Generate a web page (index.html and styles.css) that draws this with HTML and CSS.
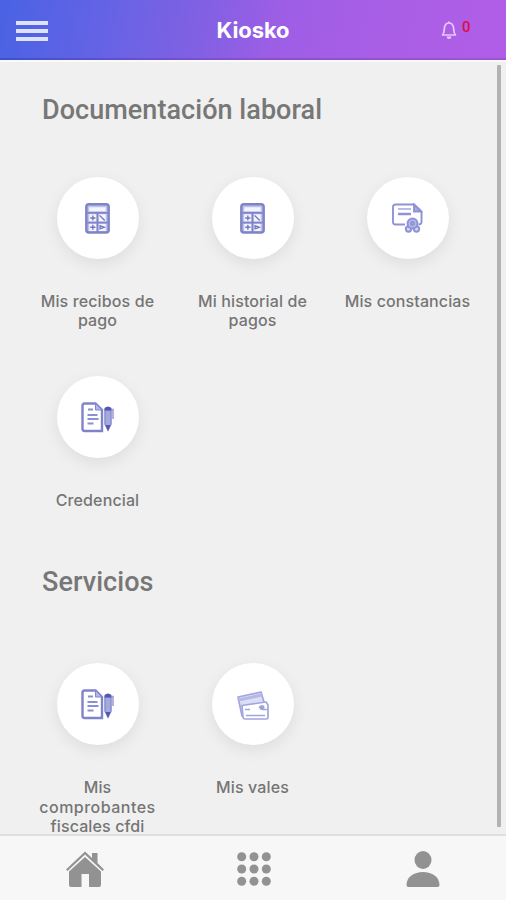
FILE: index.html
```html
<!DOCTYPE html>
<html lang="es">
<head>
<meta charset="utf-8">
<title>Kiosko</title>
<link rel="stylesheet" href="styles.css">
</head>
<body>
<svg class="sprite" aria-hidden="true">
  <symbol id="calc" viewBox="0 0 24 30">
    <rect x="1.2" y="1.2" width="21.6" height="27.4" rx="2.5" fill="#bec1ea" stroke="#7f84c9" stroke-width="2.4"/>
    <path d="M4 4h16v4H4zM4 11h7v7H4zM13 11h7v7h-7zM4 20h7v7H4zM13 20h7v7h-7z" fill="#f4f4fc"/>
    <path d="M2 9.5h20M12 10v18M2 19h20" stroke="#7f84c9" stroke-width="1.8"/>
    <path d="M5 14.5h5M7.5 12v5M14 12l5 5M5 23.5h5M7.5 21v5M14.5 22v3l4-1.5z" stroke="#7074c2" stroke-width="1.3" fill="none"/>
  </symbol>
  <symbol id="doc" viewBox="0 0 33 31">
    <path d="M3.500 1.500h11l6.500 6.500v21H3.500q-2 0-2-2v-23.500q0-2 2-2z" fill="#fff" stroke="#7f84ca" stroke-width="2.400"/>
    <path d="M14.500 1.500v6.500h6.500z" fill="#b4b8e6" stroke="#8287cc"/>
    <path d="M7 7.500h5M6.500 13h10M6.500 17h11M6.500 21.500h6" stroke="#8b90d2" stroke-width="1.800"/>
    <path d="M24 8h6v14l-3 6-3-6z" fill="#a5aade" stroke="#8a8fd0" stroke-width="1.600"/>
    <path d="M23.500 6q3.500-3 7 0v2.500h-7zM24.500 23h5L27 29z" fill="#5357b2"/>
    <path d="M30.500 7.500H32V17" stroke="#979bd8" stroke-width="1.500" fill="none"/>
  </symbol>
</svg>
<div class="app">
  <header class="top">
    <div class="burger"><i></i><i></i><i></i></div>
    <h1>Kiosko</h1>
    <div class="alerts">
      <svg class="bell" viewBox="0 0 16 19"><path d="M1.500 14C3.500 12 3 9.500 3.500 6.500C4 3.500 5.800 2 8 2s4 1.500 4.500 4.500c.5 3 0 5.500 2 7.500zM8 2V.5" fill="none" stroke="#e6cafa" stroke-width="1.700" stroke-linejoin="round"/><path d="M5.500 15.500h5Q10 18 8 18t-2.500-2.500z" fill="#e6cafa"/></svg>
      <span class="count">0</span>
    </div>
  </header>
  <main>
    <div class="content">
      <section>
        <h2>Documentación laboral</h2>
        <div class="grid">
          <div class="item"><div class="disc"><svg width="25" height="31"><use href="#calc"/></svg></div><p>Mis recibos de<br>pago</p></div>
          <div class="item"><div class="disc"><svg width="25" height="31"><use href="#calc"/></svg></div><p>Mi historial de<br>pagos</p></div>
          <div class="item"><div class="disc">
            <svg width="31" height="30" viewBox="0 0 31 30" fill="none" stroke="#8f93d5" stroke-width="1.900">
              <path d="M13 21.500H3.500q-2.500 0-2.500-2.500V4q0-2.500 2.500-2.500H22l7.500 7V19q0 2.500-3 2.500"/>
              <path d="M22 1.500v7h7z" fill="#a8ace2"/>
              <path d="M6 6h13" stroke="#b5b8e5"/><path d="M6 11h13" stroke-width="2.500"/>
              <circle cx="16.500" cy="26" r="2.700" fill="#d3d5f2"/><circle cx="24.500" cy="26" r="2.700" fill="#d3d5f2"/>
              <circle cx="20.500" cy="20.500" r="5" fill="#b3b7e6"/><circle cx="20.500" cy="20.500" r="1.500"/>
            </svg></div><p>Mis constancias</p></div>
          <div class="item"><div class="disc"><svg width="33" height="31"><use href="#doc"/></svg></div><p>Credencial</p></div>
        </div>
      </section>
      <section>
        <h2>Servicios</h2>
        <div class="grid">
          <div class="item"><div class="disc"><svg width="33" height="31"><use href="#doc"/></svg></div><p class="long">Mis<br><span class="wide">comprobantes</span><br>fiscales cfdi</p></div>
          <div class="item"><div class="disc">
            <svg class="cards" width="32" height="29" viewBox="0 0 32 29" stroke="#a2a6de" stroke-width="1.700" stroke-linejoin="round">
              <path d="M1 6L24 1l3 10-22 14z" fill="#dcdef5"/>
              <path d="M1.500 9L25 4" stroke-width="3" stroke="#b4b8e6"/>
              <path d="M5 14.500L29 11l2 3v12.500q0 1.500-1.500 1.500H8q-1.500 0-2-1.500z" fill="#fff"/>
              <path d="M8 18.500h5M22 15.500l4 3h4M9 24.500h19" fill="none"/><circle cx="25" cy="16.500" r="1.700" fill="#9297d6"/>
            </svg></div><p>Mis vales</p></div>
        </div>
      </section>
    </div>
    <div class="track"></div>
  </main>
  <nav>
    <svg width="40" height="38" viewBox="0 0 40 38"><path d="M1 19.500L20 1.500l7 6.500V3h5.500v10L39 19.500l-1.500 1.500L20 4.500 2.500 21z"/><path d="M4 21.500L20 7l16 14.500V35q0 2-2 2H24V24h-7.500v13H6q-2 0-2-2z"/></svg>
    <svg width="34" height="34" viewBox="0 0 34 34"><circle cx="4.700" cy="4.700" r="4.500"/><circle cx="17" cy="4.700" r="4.500"/><circle cx="29.300" cy="4.700" r="4.500"/><circle cx="4.700" cy="17" r="4.500"/><circle cx="17" cy="17" r="4.500"/><circle cx="29.300" cy="17" r="4.500"/><circle cx="4.700" cy="29.300" r="4.500"/><circle cx="17" cy="29.300" r="4.500"/><circle cx="29.300" cy="29.300" r="4.500"/></svg>
    <svg width="34" height="36" viewBox="0 0 34 36"><ellipse cx="17" cy="9" rx="8.500" ry="9"/><path d="M.5 34C.5 26 8 21 17 21s16.500 5 16.500 13q0 2-2 2h-29q-2 0-2-2z"/></svg>
  </nav>
</div>
</body>
</html>
```
FILE: styles.css
```css
* { box-sizing: border-box; }
body { margin: 0; font-family: Inter, "Liberation Sans", sans-serif; }
.sprite { display: none; }
.app { height: 900px; display: flex; flex-direction: column; overflow: hidden; background: #f0f0f0; }
.top {
  height: 60px; flex: none; display: grid; grid-template-columns: 1fr auto 1fr; align-items: center;
  padding: 0 34px 0 34px;
  background: linear-gradient(100deg, #4a62e4 0%, #6563e5 21%, #8560e3 42%, #9c5ee5 54%, #a95ee6 75%, #b15ee7 100%);
  border-bottom: 2px solid #8053d5;
  border-image: linear-gradient(90deg, #3b51cc, #8950d0 50%, #9c55d2) 1;
}
.burger { display: flex; flex-direction: column; gap: 4px; width: 32px; margin-left: -18px; padding-top: 3px; }
.burger i { height: 4px; background: #dde2fc; }
h1 { margin: 2px 0 0; font-size: 22px; line-height: 24px; font-weight: 700; letter-spacing: -0.100px; color: #fff; text-align: center; }
.alerts { display: flex; justify-content: flex-end; align-items: flex-start; gap: 5px; }
.bell { width: 16px; height: 19px; margin-top: 3px; }
.count { width: 10px; padding-top: 2px; font: 500 15px/15px Roboto, sans-serif; color: #e00d45; }
main { flex: 1; min-height: 0; display: flex; border-top: 2px solid #fafafa; }
.content { flex: 1; padding-left: 20px; }
h2 { margin: 0 0 0 22px; font: 500 27px/32px Roboto, sans-serif; letter-spacing: 0.050px; color: #777; white-space: nowrap; }
section { padding-top: 32px; }
section + section { padding-top: 56px; }
.grid { display: grid; grid-template-columns: repeat(3, 155px); row-gap: 46px; margin-top: 51px; }
section + section .grid { margin-top: 65px; }
.item { display: flex; flex-direction: column; align-items: center; }
.disc {
  width: 82px; height: 82px; border-radius: 50%; background: #fff;
  display: flex; align-items: center; justify-content: center;
  box-shadow: 0 5px 16px rgba(0, 0, 0, .08);
}
.cards { margin-top: 3px; }
p { margin: 33px 0 0; font-size: 16px; line-height: 19px; font-weight: 500; letter-spacing: 0.120px; color: #757575; text-align: center; white-space: nowrap; }
.long { line-height: 19.500px; }
.wide { letter-spacing: 0.480px; }
.track { width: 4px; margin: 3px 5px 7px 0; background: #b3b3b3; border-radius: 1px; }
nav {
  height: 66px; flex: none; display: grid; grid-template-columns: repeat(3, 169.300px);
  align-items: center; justify-items: center; padding-top: 2px;
  background: #f7f7f7; border-top: 2px solid #dfdfdf;
}
nav svg { fill: #929292; }
```
